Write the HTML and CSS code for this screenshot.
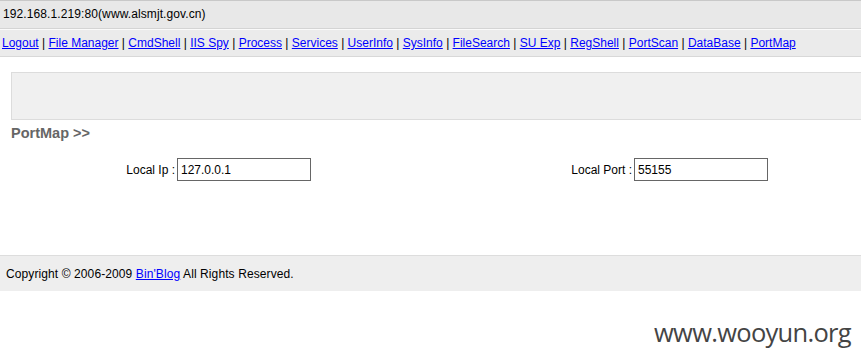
FILE: index.html
```html
<!DOCTYPE html>
<html lang="en">
<head>
    <meta charset="UTF-8">
    <title>PortMap</title>
    <link rel="stylesheet" href="styles.css">
</head>
<body>
    <div class="head">192.168.1.219:80(www.alsmjt.gov.cn)</div>
    <div class="nav">
        <a href="#">Logout</a> | <a href="#">File Manager</a> | <a href="#">CmdShell</a> | <a href="#">IIS Spy</a> | <a href="#">Process</a> | <a href="#">Services</a> | <a href="#">UserInfo</a> | <a href="#">SysInfo</a> | <a href="#">FileSearch</a> | <a href="#">SU Exp</a> | <a href="#">RegShell</a> | <a href="#">PortScan</a> | <a href="#">DataBase</a> | <a href="#">PortMap</a>
    </div>
    <div class="main">
        <div class="msg-box"></div>
        <div class="title">PortMap &gt;&gt;</div>
        <div class="form-row">
            <label class="lbl">Local Ip :</label>
            <input class="field" type="text" value="127.0.0.1">
            <label class="lbl">Local Port :</label>
            <input class="field" type="text" value="55155">
        </div>
    </div>
    <div class="footer">Copyright &copy; 2006-2009 <a href="#">Bin'Blog</a> All Rights Reserved.</div>
    <div class="watermark">www.wooyun.org</div>
</body>
</html>
```

FILE: styles.css
```css
body {
    margin: 0;
    padding: 0;
    background: #fff;
    font-family: "Liberation Sans", Arial, sans-serif;
    font-size: 12px;
    color: #000;
}
a {
    color: #0000ff;
}
.head {
    height: 27px;
    line-height: 27px;
    padding-left: 3px;
    background-color: #e8e8e8;
    border-top: 1px solid #c8c8c8;
    border-bottom: 1px solid #d4d4d4;
    letter-spacing: 0.1px;
}
.nav {
    height: 26px;
    line-height: 27px;
    padding-left: 2px;
    background-color: #ebebeb;
    border-top: 1px solid #fafafa;
    border-bottom: 1px solid #d8d8d8;
}
.main {
    padding-left: 11px;
}
.msg-box {
    margin-top: 15px;
    height: 46px;
    background-color: #f0f0f0;
    border: 1px solid #dcdcdc;
    border-right: none;
}
.title {
    margin-top: 4px;
    height: 17px;
    line-height: 18px;
    font-size: 14.5px;
    font-weight: bold;
    color: #666;
}
.form-row {
    display: grid;
    grid-template-columns: 164px 134px 319px 134px;
    column-gap: 2px;
    align-items: center;
    margin-top: 17px;
}
.lbl {
    text-align: right;
}
.field {
    box-sizing: border-box;
    width: 134px;
    height: 23px;
    margin: 0;
    padding: 2px 3px;
    border: 1px solid #666;
    font-family: "Liberation Sans", Arial, sans-serif;
    font-size: 12px;
    color: #000;
}
.footer {
    margin-top: 74px;
    height: 35px;
    line-height: 36px;
    padding-left: 6px;
    background-color: #eeeeee;
    border-top: 1px solid #dddddd;
    letter-spacing: 0.1px;
}
.watermark {
    margin-top: 24px;
    padding-right: 10px;
    text-align: right;
    font-family: "Open Sans", sans-serif;
    font-size: 25.5px;
    letter-spacing: -0.7px;
    color: #444;
}
```
